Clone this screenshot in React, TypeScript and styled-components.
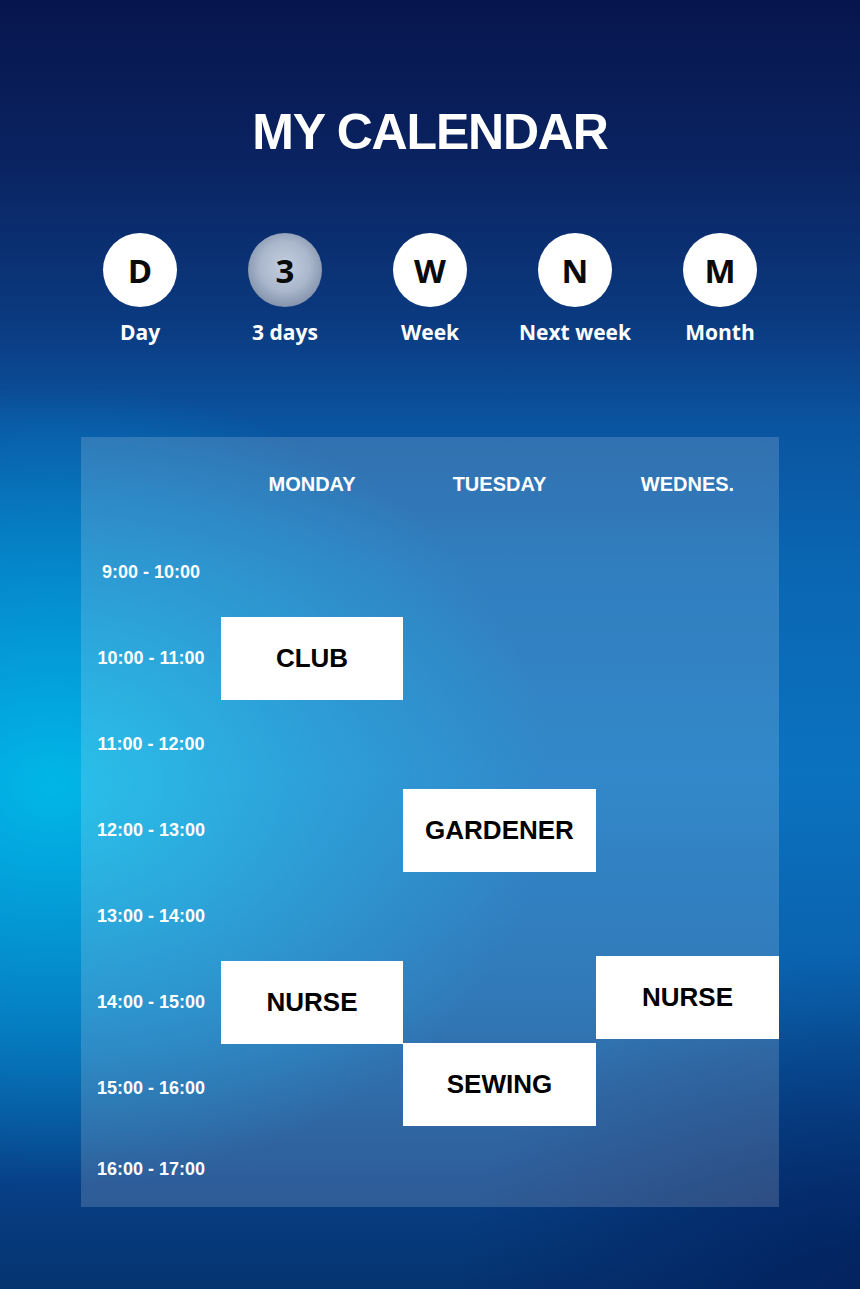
import React from "react";
import styled, { createGlobalStyle } from "styled-components";

const Global = createGlobalStyle`
  html, body { margin: 0; padding: 0; }
  body { font-family: "Liberation Sans", Arial, sans-serif; }
`;

const Page = styled.div`
  width: 860px;
  height: 1289px;
  overflow: hidden;
  box-sizing: border-box;
  padding-top: 104px;
  display: flex;
  flex-direction: column;
  align-items: center;
  background:
    radial-gradient(ellipse 620px 500px at 6% 61%, rgba(0, 190, 236, 0.9) 0%, rgba(0, 165, 226, 0.5) 45%, rgba(0, 140, 220, 0) 80%),
    radial-gradient(ellipse 500px 420px at 100% 100%, rgba(2, 30, 90, 0.8) 0%, rgba(2, 30, 90, 0) 80%),
    linear-gradient(180deg, #07154d 0%, #0a2462 13%, #0b3a80 25%, #0a54a0 33%, #0a66b2 44%, #0b72c0 60%, #0a5faa 78%, #073f86 92%, #05336f 100%);
`;

const Title = styled.h1`
  margin: 0;
  font-family: "Liberation Sans", Arial, sans-serif;
  font-weight: 700;
  font-size: 50px;
  line-height: 56px;
  letter-spacing: -1.2px;
  color: #ffffff;
`;

const Nav = styled.div`
  margin-top: 73px;
  display: grid;
  grid-template-columns: repeat(5, 145px);
`;

const NavItem = styled.div`
  display: flex;
  flex-direction: column;
  align-items: center;
`;

const Circle = styled.div<{ $active?: boolean }>`
  width: 74px;
  height: 74px;
  border-radius: 50%;
  display: flex;
  align-items: center;
  justify-content: center;
  font-family: "Open Sans", "Liberation Sans", sans-serif;
  font-weight: 700;
  font-size: 33px;
  color: #0a0a0a;
  background: ${(p) =>
    p.$active
      ? "radial-gradient(circle at 50% 45%, #c4cfdf 0%, #aab7cc 45%, #7d8ca6 80%, #5f6f8c 100%)"
      : "#ffffff"};
`;

const NavLabel = styled.div`
  margin-top: 10px;
  font-family: "Open Sans", "Lato", sans-serif;
  font-weight: 700;
  font-size: 21px;
  line-height: 30px;
  color: #ffffff;
`;

const Panel = styled.div`
  margin-top: 90px;
  width: 698px;
  height: 770px;
  background: rgba(255, 255, 255, 0.16);
  display: grid;
  grid-template-columns: 140px 182px 193px 183px;
  grid-template-rows: 92px repeat(7, 86px) 76px;
`;

const DayHead = styled.div<{ $col: number }>`
  grid-row: 1;
  grid-column: ${(p) => p.$col};
  display: flex;
  align-items: center;
  justify-content: center;
  padding-top: 2px;
  font-family: "Liberation Sans", Arial, sans-serif;
  font-weight: 700;
  font-size: 20px;
  color: #ffffff;
`;

const TimeLabel = styled.div<{ $row: number }>`
  grid-row: ${(p) => p.$row};
  grid-column: 1;
  display: flex;
  align-items: center;
  justify-content: center;
  font-family: "Liberation Sans", Arial, sans-serif;
  font-weight: 700;
  font-size: 18px;
  color: #ffffff;
`;

const Event = styled.div<{ $row: number; $col: number; $shift?: number }>`
  grid-row: ${(p) => p.$row};
  grid-column: ${(p) => p.$col};
  margin: 2px 0 1px;
  transform: translateY(${(p) => p.$shift ?? 0}px);
  background: #ffffff;
  display: flex;
  align-items: center;
  justify-content: center;
  font-family: "Liberation Sans", Arial, sans-serif;
  font-weight: 700;
  font-size: 26px;
  color: #000000;
`;

const views = [
  { k: "D", label: "Day" },
  { k: "3", label: "3 days", active: true },
  { k: "W", label: "Week" },
  { k: "N", label: "Next week" },
  { k: "M", label: "Month" },
];

const times = [
  "9:00 - 10:00",
  "10:00 - 11:00",
  "11:00 - 12:00",
  "12:00 - 13:00",
  "13:00 - 14:00",
  "14:00 - 15:00",
  "15:00 - 16:00",
  "16:00 - 17:00",
];

const events = [
  { name: "CLUB", row: 3, col: 2 },
  { name: "GARDENER", row: 5, col: 3 },
  { name: "NURSE", row: 7, col: 2 },
  { name: "NURSE", row: 7, col: 4, shift: -5 },
  { name: "SEWING", row: 8, col: 3, shift: -4 },
];

export default function App() {
  return (
    <>
      <Global />
      <Page>
        <Title>MY CALENDAR</Title>
        <Nav>
          {views.map((v) => (
            <NavItem key={v.label}>
              <Circle $active={v.active}>{v.k}</Circle>
              <NavLabel>{v.label}</NavLabel>
            </NavItem>
          ))}
        </Nav>
        <Panel>
          <DayHead $col={2}>MONDAY</DayHead>
          <DayHead $col={3}>TUESDAY</DayHead>
          <DayHead $col={4}>WEDNES.</DayHead>
          {times.map((t, i) => (
            <TimeLabel key={t} $row={i + 2}>
              {t}
            </TimeLabel>
          ))}
          {events.map((e, i) => (
            <Event key={i} $row={e.row} $col={e.col} $shift={e.shift}>
              {e.name}
            </Event>
          ))}
        </Panel>
      </Page>
    </>
  );
}
